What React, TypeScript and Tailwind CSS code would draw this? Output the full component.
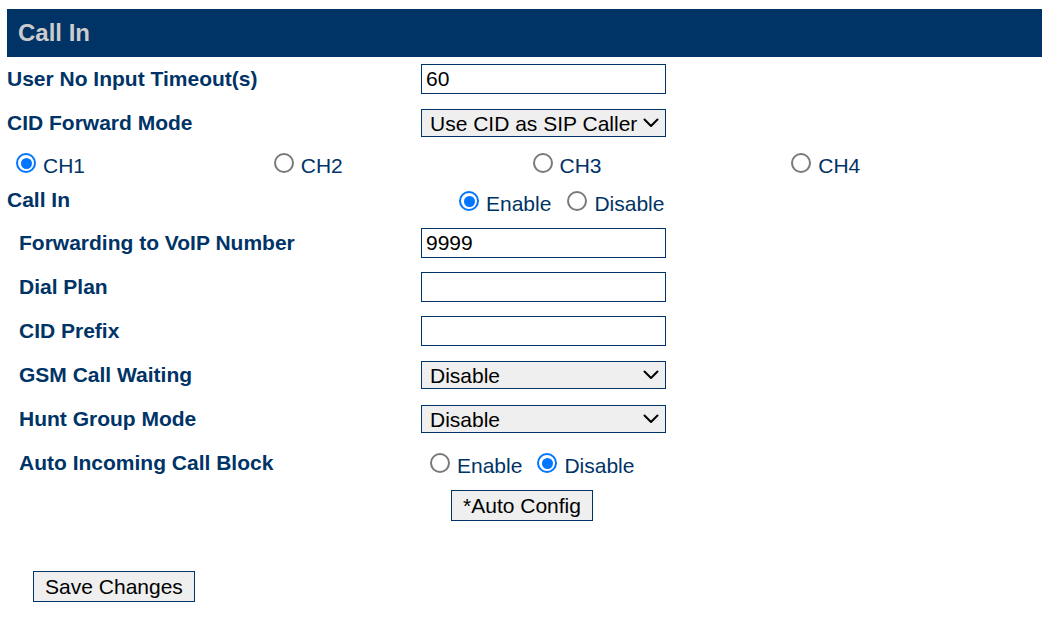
import React from "react";

const Radio = ({ checked }: { checked?: boolean }) =>
  checked ? (
    <span className="inline-flex w-[20px] h-[20px] shrink-0 rounded-full border-[2px] border-[#0075ff] bg-white items-center justify-center">
      <span className="w-[11px] h-[11px] rounded-full bg-[#0075ff]" />
    </span>
  ) : (
    <span className="inline-block w-[20px] h-[20px] shrink-0 rounded-full border-[2px] border-[#7a7a7a] bg-white" />
  );

const RadioLabel = ({ checked, text }: { checked?: boolean; text: string }) => (
  <label className="flex items-center gap-[7px]">
    <Radio checked={checked} />
    <span className="text-[21px] text-[#003366] leading-none mt-[5px]">{text}</span>
  </label>
);

const Chevron = () => (
  <svg width="16" height="10" viewBox="0 0 16 10" className="absolute right-[7px] top-1/2 -translate-y-1/2 pointer-events-none">
    <path d="M1.5 1.5 L8 8 L14.5 1.5" fill="none" stroke="#000" strokeWidth="2" strokeLinecap="round" strokeLinejoin="round" />
  </svg>
);

const Select = ({ value }: { value: string }) => (
  <div className="relative w-[245px] h-[28px]">
    <select
      defaultValue={value}
      className="appearance-none w-full h-full bg-[#efefef] border border-[#003366] pl-[8px] text-[21px] leading-none text-black outline-none"
    >
      <option>{value}</option>
    </select>
    <Chevron />
  </div>
);

const TextInput = ({ value }: { value: string }) => (
  <input
    defaultValue={value}
    className="w-[245px] h-[30px] border border-[#003366] px-[4px] text-[21px] text-black bg-white outline-none"
  />
);

const Label = ({ children, indent }: { children: React.ReactNode; indent?: boolean }) => (
  <div className={`w-[414px] shrink-0 text-[21px] font-bold text-[#003366] leading-none relative top-[-1px] ${indent ? "pl-[12px]" : ""}`}>
    {children}
  </div>
);

export default function App() {
  return (
    <div className="w-[1056px] h-[623px] bg-white font-['Liberation_Sans',Arial,sans-serif] overflow-hidden">
      <div className="pl-[7px] pt-[9px] w-[1042px]">
        <div className="h-[48px] bg-[#003366] flex items-center pl-[11px] text-[24px] font-bold text-[#cccccc]">
          Call In
        </div>

        <div className="h-[44px] flex items-center">
          <Label>User No Input Timeout(s)</Label>
          <TextInput value="60" />
        </div>

        <div className="h-[44px] flex items-center">
          <Label>CID Forward Mode</Label>
          <Select value="Use CID as SIP Caller" />
        </div>

        <div className="h-[36px] grid grid-cols-4 items-center">
          <div className="pl-[9px]"><RadioLabel checked text="CH1" /></div>
          <div className="pl-[8px]"><RadioLabel text="CH2" /></div>
          <div className="pl-[8px]"><RadioLabel text="CH3" /></div>
          <div className="pl-[8px]"><RadioLabel text="CH4" /></div>
        </div>

        <div className="h-[40px] flex items-center">
          <Label>
            <span className="relative top-[-1px]">Call In</span>
          </Label>
          <div className="flex items-center gap-[16px] pl-[38px]">
            <RadioLabel checked text="Enable" />
            <RadioLabel text="Disable" />
          </div>
        </div>

        <div className="h-[44px] flex items-center">
          <Label indent>Forwarding to VoIP Number</Label>
          <TextInput value="9999" />
        </div>

        <div className="h-[44px] flex items-center">
          <Label indent>Dial Plan</Label>
          <TextInput value="" />
        </div>

        <div className="h-[44px] flex items-center">
          <Label indent>CID Prefix</Label>
          <TextInput value="" />
        </div>

        <div className="h-[44px] flex items-center">
          <Label indent>GSM Call Waiting</Label>
          <Select value="Disable" />
        </div>

        <div className="h-[44px] flex items-center">
          <Label indent>Hunt Group Mode</Label>
          <Select value="Disable" />
        </div>

        <div className="h-[44px] flex items-center">
          <Label indent>Auto Incoming Call Block</Label>
          <div className="flex items-center gap-[15px] pl-[9px]">
            <RadioLabel text="Enable" />
            <RadioLabel checked text="Disable" />
          </div>
        </div>

        <div className="mt-[5px] pl-[444px]">
          <button className="w-[142px] h-[31px] bg-[#efefef] border border-[#003366] text-[21px] text-black leading-none">
            *Auto Config
          </button>
        </div>

        <div className="mt-[50px] pl-[26px]">
          <button className="w-[162px] h-[31px] bg-[#efefef] border border-[#003366] text-[21px] text-black leading-none">
            Save Changes
          </button>
        </div>
      </div>
    </div>
  );
}
